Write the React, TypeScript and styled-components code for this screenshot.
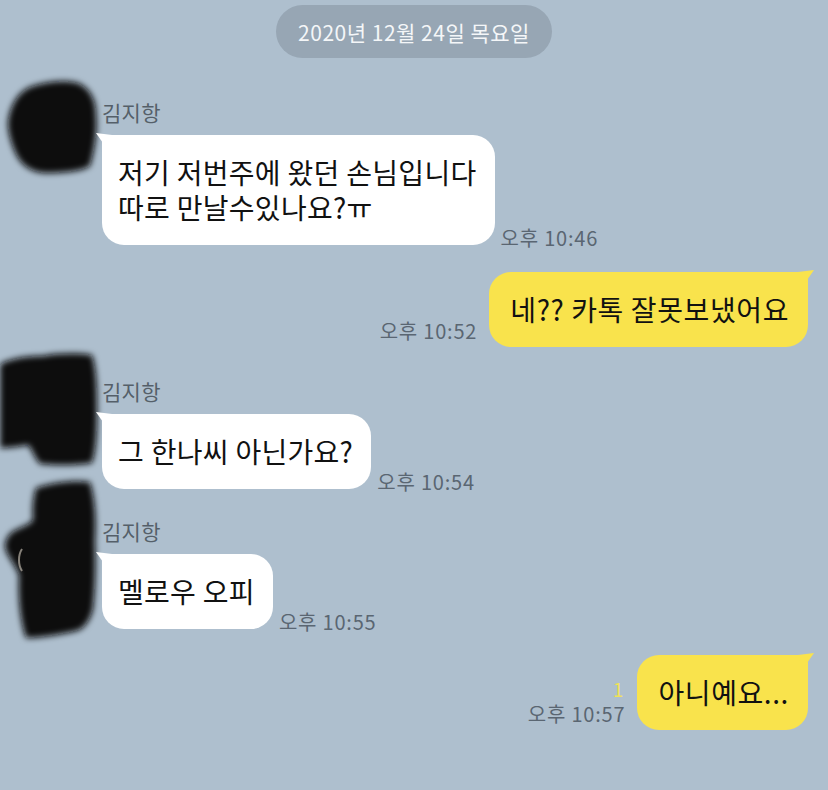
import React from "react";
import styled, { createGlobalStyle, css } from "styled-components";

const colors = {
  background: "#aebfce",
  pill: "#97a6b4",
  white: "#ffffff",
  yellow: "#f9e34c",
  text: "#111111",
  name: "#555f69",
  time: "#5a6672",
  unread: "#efe15a",
};

const GlobalStyle = createGlobalStyle`
  html, body {
    margin: 0;
    padding: 0;
    background: ${colors.background};
  }
  body {
    font-family: "Noto Sans CJK KR", "Noto Sans", sans-serif;
    -webkit-font-smoothing: antialiased;
  }
`;

const Screen = styled.div`
  width: 828px;
  height: 790px;
  overflow: hidden;
  display: flex;
  flex-direction: column;
  padding-top: 5px;
  box-sizing: border-box;
  background: ${colors.background};
`;

const DatePill = styled.div`
  align-self: center;
  height: 53px;
  padding: 0 22px;
  border-radius: 27px;
  background: ${colors.pill};
  color: #f4f6f8;
  font-size: 21px;
  letter-spacing: 0.5px;
  display: flex;
  align-items: center;
  margin-bottom: 43px;
`;

const Row = styled.div<{ $top: number; $mine?: boolean }>`
  display: flex;
  margin-top: ${(p) => p.$top}px;
  justify-content: ${(p) => (p.$mine ? "flex-end" : "flex-start")};
  padding-right: ${(p) => (p.$mine ? "20px" : "0")};
`;

const AvatarSlot = styled.div`
  width: 102px;
  flex-shrink: 0;
`;

const AvatarSvg = styled.svg<{ $offset: number }>`
  display: block;
  margin-top: ${(p) => p.$offset}px;
  margin-bottom: -200px;
  overflow: visible;
`;

const Column = styled.div`
  display: flex;
  flex-direction: column;
  align-items: flex-start;
`;

const Name = styled.div`
  font-size: 21px;
  line-height: 22px;
  letter-spacing: 0.3px;
  color: ${colors.name};
  margin-bottom: 12px;
`;

const BubbleLine = styled.div<{ $mine?: boolean }>`
  display: flex;
  align-items: flex-end;
  flex-direction: ${(p) => (p.$mine ? "row-reverse" : "row")};
`;

const Bubble = styled.div<{ $mine?: boolean }>`
  position: relative;
  padding: ${(p) => (p.$mine ? "20px 19px 20px 21px" : "20px 18px 20px 16px")};
  font-size: 28px;
  line-height: 35px;
  letter-spacing: ${(p) => (p.$mine ? "0.6px" : "0.3px")};
  color: ${colors.text};
  background: ${(p) => (p.$mine ? colors.yellow : colors.white)};
  border-radius: 22px;
  white-space: pre;

  &::before {
    content: "";
    position: absolute;
    top: -2px;
    width: 16px;
    height: 16px;
    background: inherit;
    ${(p) =>
      p.$mine
        ? css`
            right: -6px;
            clip-path: polygon(100% 0, 30% 100%, 0 12%);
          `
        : css`
            left: -6px;
            clip-path: polygon(0 0, 100% 12%, 70% 100%);
          `}
  }
  ${(p) =>
    p.$mine
      ? css`
          border-top-right-radius: 6px;
        `
      : css`
          border-top-left-radius: 6px;
        `}
`;

const Meta = styled.div<{ $mine?: boolean }>`
  display: flex;
  flex-direction: column;
  align-items: ${(p) => (p.$mine ? "flex-end" : "flex-start")};
  margin: ${(p) => (p.$mine ? "0 12px 6px 0" : "0 0 -3px 6px")};
`;

const Unread = styled.div`
  font-size: 19px;
  line-height: 18px;
  color: ${colors.unread};
  margin: 0 2px 6px 0;
`;

const Time = styled.div`
  font-size: 20px;
  line-height: 20px;
  letter-spacing: 0.8px;
  color: ${colors.time};
  white-space: nowrap;
`;

type Blob = { w: number; h: number; offset: number; d: string; glint?: boolean };

const blobs: Record<string, Blob> = {
  first: {
    w: 100,
    h: 96,
    offset: -21,
    d: "M33 6 C48 1 66 0 78 3 C90 8 96 20 96 34 C98 52 94 72 90 86 C80 92 62 93 44 93 C30 92 20 84 15 72 C10 60 6 46 9 36 C12 22 20 10 33 6 Z",
  },
  second: {
    w: 100,
    h: 116,
    offset: -27,
    d: "M2 10 C16 4 30 3 43 3 C58 0 78 0 92 2 C97 16 97 40 97 60 C97 82 96 98 92 110 C72 113 54 112 40 111 C34 104 32 96 28 92 C18 94 8 95 0 95 L0 12 Z",
  },
  third: {
    w: 100,
    h: 162,
    offset: -41,
    glint: true,
    d: "M36 9 C52 4 72 1 90 3 C96 22 96 44 95 62 C96 90 95 112 93 130 C90 142 84 150 76 152 C58 156 40 159 26 159 C20 142 18 118 19 96 C12 80 4 74 5 65 C7 56 12 52 18 50 C26 46 32 44 33 40 C32 30 33 18 36 9 Z",
  },
};

function Avatar({ blob, id }: { blob: Blob; id: string }) {
  return (
    <AvatarSlot>
      <AvatarSvg $offset={blob.offset} width={blob.w} height={blob.h} viewBox={`0 0 ${blob.w} ${blob.h}`}>
        <defs>
          <filter id={id} x="-20%" y="-20%" width="140%" height="140%">
            <feGaussianBlur stdDeviation="3" />
          </filter>
        </defs>
        <path d={blob.d} fill="#0b0b0c" filter={`url(#${id})`} />
        {blob.glint && (
          <path d="M22 70 C18 76 18 86 22 92" stroke="#b9b2a6" strokeWidth="2" fill="none" opacity="0.7" />
        )}
      </AvatarSvg>
    </AvatarSlot>
  );
}

type IncomingProps = { top: number; blob: Blob; id: string; text: string; time: string };

function Incoming({ top, blob, id, text, time }: IncomingProps) {
  return (
    <Row $top={top}>
      <Avatar blob={blob} id={id} />
      <Column>
        <Name>김지항</Name>
        <BubbleLine>
          <Bubble>{text}</Bubble>
          <Meta>
            <Time>{time}</Time>
          </Meta>
        </BubbleLine>
      </Column>
    </Row>
  );
}

type OutgoingProps = { top: number; text: string; time: string; unread?: number };

function Outgoing({ top, text, time, unread }: OutgoingProps) {
  return (
    <Row $top={top} $mine>
      <BubbleLine $mine>
        <Bubble $mine>{text}</Bubble>
        <Meta $mine>
          {unread ? <Unread>{unread}</Unread> : null}
          <Time>{time}</Time>
        </Meta>
      </BubbleLine>
    </Row>
  );
}

export default function App() {
  return (
    <>
      <GlobalStyle />
      <Screen>
        <DatePill>2020년 12월 24일 목요일</DatePill>
        <Incoming
          top={0}
          blob={blobs.first}
          id="blur-a"
          text={"저기 저번주에 왔던 손님입니다\n따로 만날수있나요?ㅠ"}
          time="오후 10:46"
        />
        <Outgoing top={27} text="네?? 카톡 잘못보냈어요" time="오후 10:52" />
        <Incoming top={33} blob={blobs.second} id="blur-b" text="그 한나씨 아닌가요?" time="오후 10:54" />
        <Incoming top={31} blob={blobs.third} id="blur-c" text="멜로우 오피" time="오후 10:55" />
        <Outgoing top={26} text="아니예요..." time="오후 10:57" unread={1} />
      </Screen>
    </>
  );
}
